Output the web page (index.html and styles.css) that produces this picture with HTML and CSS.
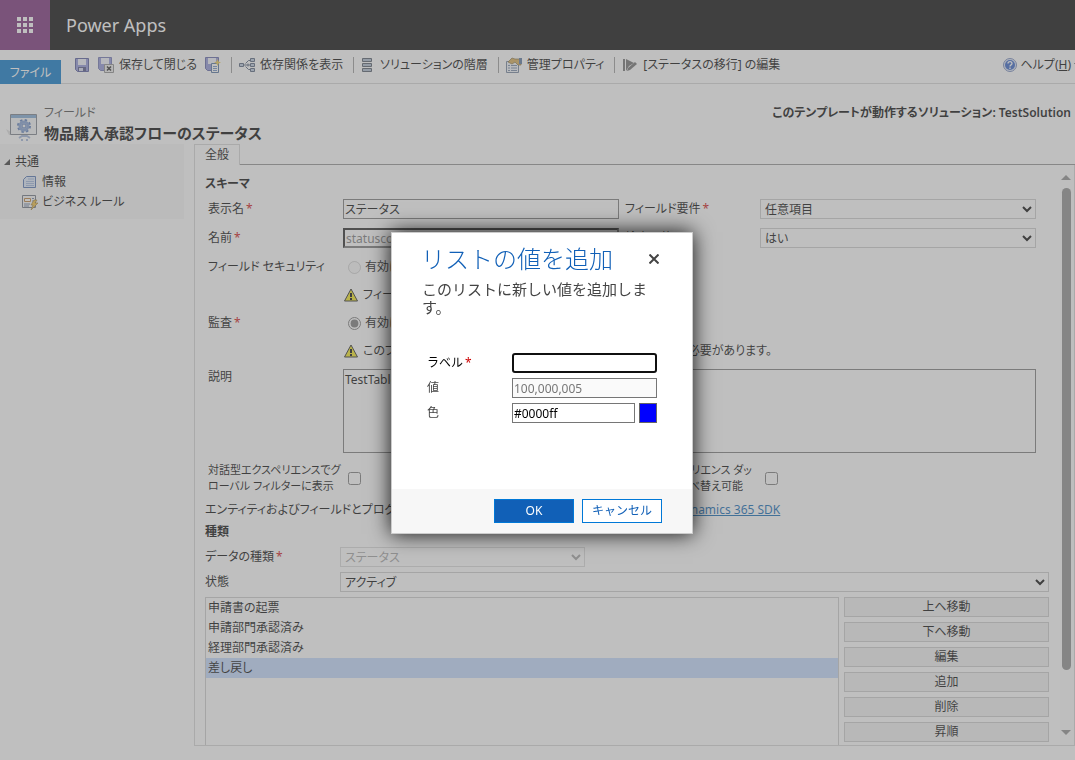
FILE: index.html
```html
<!DOCTYPE html>
<html lang="ja">
<head>
	<meta charset="utf-8">
	<meta name="viewport" content="width=device-width, initial-scale=1">
	<title>Power Apps</title>
	<link rel="stylesheet" href="styles.css">
</head>
<body>
	<div class="page">
		<header class="topbar">
			<button class="waffle" aria-label="アプリ">
				<svg width="16" height="16" viewBox="0 0 16 16" fill="#fff">
					<path d="M0 0h4v4H0zM6 0h4v4H6zM12 0h4v4h-4zM0 6h4v4H0zM6 6h4v4H6zM12 6h4v4h-4zM0 12h4v4H0zM6 12h4v4H6zM12 12h4v4h-4z"/>
				</svg>
			</button>
			<span class="brand">Power Apps</span>
		</header>

		<nav class="ribbon">
			<button class="file-tab">ファイル</button>
			<div class="tools">
				<button class="tool" aria-label="保存">
					<svg width="16" height="16" viewBox="0 0 16 16">
						<path d="M1.500 1.500h13v13h-11l-2-2z" fill="#8c92d6" stroke="#4f5598"/>
						<path d="M4 2h8v6H4z" fill="#eef1fb"/>
						<path d="M4 10h8v4H4z" fill="#4a4f80"/>
						<path d="M5 11h4v3H5z" fill="#d4d8ee"/>
					</svg>
				</button>
				<button class="tool">
					<svg width="16" height="16" viewBox="0 0 16 16">
						<path d="M.5 .5h13v13h-11l-2-2z" fill="#8c92d6" stroke="#6a70b0"/>
						<path d="M3 1h8v6H3z" fill="#eef1fb"/>
						<path d="M6.500 7.500h9v8h-9z" fill="#ececec" stroke="#8a8a8a"/>
						<path d="M9 9.500l4 4M13 9.500l-4 4" stroke="#222" stroke-width="1.500"/>
					</svg>
					保存して閉じる
				</button>
				<button class="tool" aria-label="保存して新規作成">
					<svg width="16" height="16" viewBox="0 0 16 16">
						<path d="M.5 .5h13v13h-11l-2-2z" fill="#8c92d6" stroke="#5a60a4"/>
						<path d="M3 1h8v6H3z" fill="#eef1fb"/>
						<path d="M6.500 6.500h7v9h-7z" fill="#fff" stroke="#4b6c9b"/>
						<path d="M8 9.500h4M8 11.500h4M8 13.500h4" stroke="#6b8cc0"/>
						<path d="M12.500 2l1 2.500 2.500 1-2.500 1-1 2.500-1-2.500-2.500-1 2.500-1z" fill="#e8c64c"/>
					</svg>
				</button>
				<span class="sep"></span>
				<button class="tool">
					<svg width="16" height="16" viewBox="0 0 16 16" fill="#b9c9de" stroke="#4f5f78">
						<path d="M.5 6.500h4v3h-4zM11.500 1.500h4v3h-4zM11.500 6.500h4v3h-4zM11.500 11.500h4v3h-4z"/>
						<path d="M5 8h6M6.500 6.500l3-3h1.500M6.500 9.500l3 3h1.500M9 6.500v3" fill="none"/>
					</svg>
					依存関係を表示
				</button>
				<span class="sep"></span>
				<button class="tool">
					<svg width="14" height="16" viewBox="0 0 14 16" fill="#a9b9cc" stroke="#4a5562">
						<path d="M1.500 1.500h9v3h-9zM1.500 6.500h9v3h-9zM1.500 11.500h9v3h-9z"/>
					</svg>
					ソリューションの階層
				</button>
				<span class="sep"></span>
				<button class="tool">
					<svg width="16" height="16" viewBox="0 0 16 16">
						<path d="M.5 4.500h12v11H.5z" fill="#f1f5fb" stroke="#6d7f99"/>
						<path d="M2 8.500h2M2 11h2M2 13.500h2M5 8.500h6M5 11h6M5 13.500h6" stroke="#7286a4"/>
						<path d="M2 5l4-4 3 1h6v6h-3L9 5 6 7 4 6z" fill="#d5a950" stroke="#7a6530" stroke-width=".7"/>
						<path d="M13 1h3v6h-3z" fill="#55739c"/>
					</svg>
					管理プロパティ
				</button>
				<span class="sep"></span>
				<button class="tool">
					<svg width="16" height="16" viewBox="0 0 16 16" fill="#6b6b6b">
						<path d="M1 2h2v12H1zM4 2l8 4-5 3-3 5z"/>
						<path d="M13 5l2 2-7 6-3 1 1-3z"/>
					</svg>
					[ステータスの移行] の編集
				</button>
			</div>
			<button class="tool help">
				<svg width="14" height="14" viewBox="0 0 14 14">
					<circle cx="7" cy="7" r="6.500" fill="#dfe9fb" stroke="#6f84b8"/>
					<circle cx="7" cy="7" r="5" fill="#2f5fc4"/>
					<path d="M5 5.500c0-2.500 4-2.500 4 0 0 1.500-2 1.300-2 3M7 9.500v1.500" fill="none" stroke="#fff" stroke-width="1.300"/>
				</svg>
				<span>ヘルプ(<u>H</u>)</span>
				<svg width="7" height="4" viewBox="0 0 7 4"><path d="M0 0h7L3.500 4z" fill="#333"/></svg>
			</button>
		</nav>

		<div class="title-row">
			<svg class="entity-icon" width="32" height="32" viewBox="0 0 32 32">
				<path d="M0 20l5 3v3H3z" fill="#ddd"/>
				<path d="M4.500 5.500h26v20h-26z" fill="#f2f4f7" stroke="#777d86"/>
				<path d="M5 6h25v3H5z" fill="#7ba6d2"/>
				<circle cx="18" cy="17" r="6" fill="none" stroke="#5478b8" stroke-width="2" stroke-dasharray="2.400 2.310"/>
				<circle cx="18" cy="17" r="4" fill="#dce7f8" stroke="#7f9dd0" stroke-width="3"/>
				<circle cx="18" cy="17" r="2" fill="#f2f4f7" stroke="#5478b8"/>
				<path d="M13 29l3-2h5l3 2M15 31h2M20 31h2" fill="none" stroke="#9fb2d8" stroke-width="2"/>
			</svg>
			<div class="titles">
				<span class="kind">フィールド</span>
				<h1>物品購入承認フローのステータス</h1>
			</div>
			<p class="solution">このテンプレートが動作するソリューション: TestSolution</p>
		</div>

		<div class="main">
			<aside class="sidebar">
				<h2>
					<svg width="8" height="8" viewBox="0 0 8 8"><path d="M6 1v6H0z" fill="#333"/></svg>
					共通
				</h2>
				<a href="#">
					<svg width="16" height="16" viewBox="0 0 16 16">
						<path d="M4.500 2.500h9v11h-12v-8z" fill="#dce8fa" stroke="#4a6fae"/>
						<path d="M6 5h6M4 7.500h8M4 9.500h8M4 11.500h8" stroke="#9db4dc"/>
					</svg>
					情報
				</a>
				<a href="#">
					<svg width="16" height="16" viewBox="0 0 16 16">
						<path d="M.5 1.500h13v12H.5z" fill="#f7f7f7" stroke="#666e7c"/>
						<path d="M2.500 4.500h6v3h-6z" fill="#fff" stroke="#b77b35"/>
						<path d="M2 10h6M2 12h5M10 4.500h2M10 7h2" stroke="#63799c"/>
						<path d="M12 6h3l-2 3h3l-7 7 2-5H9z" fill="#f0bd3a" stroke="#8b6a20" stroke-width=".6"/>
					</svg>
					ビジネス ルール
				</a>
			</aside>

			<section class="content">
				<div class="tabs">
					<button class="tab">全般</button>
				</div>
				<div class="panel">
					<form class="form">
						<h3>スキーマ</h3>
						<div class="fields">
							<label for="display">表示名<b class="req">*</b></label>
							<input id="display" type="text" value="ステータス">
							<label class="second" for="need">フィールド要件<b class="req">*</b></label>
							<select id="need"><option>任意項目</option></select>

							<label for="name">名前<b class="req">*</b></label>
							<input id="name" class="sunken" type="text" value="statuscode" disabled>
							<label class="second" for="search">検索可能</label>
							<select id="search"><option>はい</option></select>

							<span>フィールド セキュリティ</span>
							<div class="choice wide">
								<input type="radio" id="sec" name="sec" disabled><label for="sec">有効にする</label>
							</div>
							<p class="warn">
								<svg width="14" height="14" viewBox="0 0 14 14"><path d="M7 1l6.500 12H.5z" fill="#f4e614" stroke="#222"/><path d="M7 5v4M7 10v2" stroke="#000" stroke-width="2"/></svg>
								フィールド セキュリティは使用不可
							</p>

							<span>監査<b class="req">*</b></span>
							<div class="choice wide">
								<input type="radio" id="audit" name="audit" checked><label for="audit">有効にする</label>
							</div>
							<p class="warn">
								<svg width="14" height="14" viewBox="0 0 14 14"><path d="M7 1l6.500 12H.5z" fill="#f4e614" stroke="#222"/><path d="M7 5v4M7 10v2" stroke="#000" stroke-width="2"/></svg>
								このフィールドを監査するには、エンティティの監査を有効にする必要があります。
							</p>

							<label for="memo">説明</label>
							<textarea id="memo" class="wide">TestTable のステータス</textarea>

							<label class="lines" for="global">対話型エクスペリエンスでグ<br>ローバル フィルターに表示</label>
							<div class="choice"><input type="checkbox" id="global"></div>
							<label class="lines second spill" for="sort"><span>対話型エクスペリエンス ダッ<br>シュボードで並べ替え可能</span></label>
							<div class="choice"><input type="checkbox" id="sort"></div>
						</div>
						<p class="note">エンティティおよびフィールドとプログラムで対話する方法の詳細情報については、<a href="#">Microsoft Dynamics 365 SDK</a></p>

						<h3>種類</h3>
						<div class="types">
							<label for="datatype">データの種類<b class="req">*</b></label>
							<select id="datatype" class="short" disabled><option>ステータス</option></select>
							<label for="state">状態</label>
							<select id="state"><option>アクティブ</option></select>
						</div>
						<div class="values">
							<select class="list" size="9" aria-label="値の一覧">
								<option>申請書の起票</option>
								<option>申請部門承認済み</option>
								<option>経理部門承認済み</option>
								<option selected>差し戻し</option>
							</select>
							<div class="actions">
								<button type="button">上へ移動</button>
								<button type="button">下へ移動</button>
								<button type="button">編集</button>
								<button type="button">追加</button>
								<button type="button">削除</button>
								<button type="button">昇順</button>
							</div>
						</div>
					</form>
					<div class="scrollbar">
						<svg width="10" height="5" viewBox="0 0 10 5"><path d="M0 5h10L5 0z" fill="#8a8a8a"/></svg>
						<div class="thumb"></div>
						<svg width="10" height="5" viewBox="0 0 10 5"><path d="M0 0h10L5 5z" fill="#8a8a8a"/></svg>
					</div>
				</div>
			</section>
		</div>
	</div>

	<div class="overlay">
		<div class="dialog" role="dialog" aria-labelledby="dialog-title">
			<div class="dialog-head">
				<h2 id="dialog-title">リストの値を追加</h2>
				<button class="close" aria-label="閉じる">
					<svg width="10" height="10" viewBox="0 0 10 10"><path d="M.5 .5l9 9M9.500 .5l-9 9" stroke="#444" stroke-width="2"/></svg>
				</button>
			</div>
			<p class="dialog-text">このリストに新しい値を追加します。</p>
			<div class="dialog-form">
				<label class="main-label" for="label">ラベル<b class="req">*</b></label>
				<input id="label" class="focused" type="text">
				<label for="value">値</label>
				<input id="value" type="text" value="100,000,005" disabled>
				<label for="color">色</label>
				<div class="color-row">
					<input id="color" type="text" value="#0000ff">
					<button class="swatch" aria-label="色の選択"></button>
				</div>
			</div>
			<div class="dialog-foot">
				<button class="ok">OK</button>
				<button class="cancel">キャンセル</button>
			</div>
		</div>
	</div>
</body>
</html>
```

FILE: styles.css
```css
* { box-sizing: border-box; }

body {
	margin: 0;
	font: 12px/16px "Noto Sans", "Noto Sans CJK JP", sans-serif;
	color: #000;
	background: #fff;
}
h1, h2, h3, p { margin: 0; }
button, input, select, textarea { font: inherit; color: inherit; }
button { border: 0; background: none; padding: 0; }
svg { flex: none; }
.req { color: #c00; font-weight: normal; margin-left: 2px; }

/* proportional kana for the page itself */
.page {
	height: 100vh;
	display: flex;
	flex-direction: column;
	overflow: hidden;
	font-feature-settings: "palt";
}

/* top */
.topbar { display: flex; height: 50px; flex: none; background: #000; align-items: center; }
.waffle {
	width: 50px;
	height: 50px;
	background: #742774;
	display: flex;
	align-items: center;
	justify-content: center;
}
.brand { color: #fff; font-size: 18px; line-height: 26px; padding-left: 16px; }

.ribbon {
	display: flex;
	flex: none;
	height: 34px;
	border-bottom: 1px solid #d4d4d4;
}
.file-tab { width: 61px; height: 24px; margin-top: 10px; padding-top: 2px; background: #0072c6; color: #fff; flex: none; }
.tools { display: flex; align-items: center; flex: 1; padding: 0 0 4px 13px; min-width: 0; }
.tool { display: flex; align-items: center; gap: 5px; white-space: nowrap; margin-right: 8px; }
.sep { width: 1px; height: 16px; background: #999; margin: 0 7px 0 2px; }
.help { gap: 3px; margin-right: -6px; padding-bottom: 4px; }

.title-row { display: flex; height: 60px; flex: none; padding: 21px 4px 0 6px; }
.entity-icon { margin-top: 4px; }
.titles { flex: 1; padding-left: 6px; }
.kind { color: #444; }
.titles h1 { font-size: 15px; line-height: 24px; }
.solution { font-weight: 600; }

/* main */
.main { flex: 1; display: flex; min-height: 0; gap: 10px; padding-bottom: 14px; }
.sidebar { width: 184px; flex: none; height: 75px; background: #f6f6f6; padding: 8px 4px; }
.sidebar h2 { display: flex; align-items: center; gap: 3px; font-size: 12px; font-weight: normal; line-height: 20px; }
.sidebar a { display: flex; align-items: center; gap: 4px; padding-left: 18px; color: #000; text-decoration: none; line-height: 20px; }

.content { flex: 1; display: flex; flex-direction: column; min-width: 0; }
.tabs { display: flex; flex: none; height: 21px; }
.tabs::after { content: ""; flex: 1; border-bottom: 1px solid #8e8e8e; }
.tab { width: 46px; border: 1px solid #d4d4d4; border-bottom: 0; }
.panel {
	flex: 1;
	display: flex;
	gap: 11px;
	min-height: 0;
	overflow: hidden;
	border: 1px solid #d4d4d4;
	border-top: 0;
}
.form { flex: 1; min-width: 0; padding: 10px 0 0 10px; }
.form h3 { font-size: 12px; line-height: 18px; margin-bottom: 6px; }
.fields {
	display: grid;
	grid-template-columns: 135px 1fr 141px 1fr;
	grid-auto-rows: minmax(18px, auto);
	row-gap: 9px;
	align-items: center;
	padding: 0 13px 0 3px;
}
.second { padding-left: 6px; }
.wide { grid-column: 2 / -1; }
.warn { grid-column: 2 / -1; display: flex; align-items: center; gap: 5px; padding-left: 1px; white-space: nowrap; height: 18px; }
.choice { display: flex; align-items: center; gap: 4px; height: 20px; }
.choice input { margin: 0 0 0 5px; accent-color: #767676; }
.fields > label[for="memo"] { align-self: start; }
.lines { white-space: nowrap; font-size: 11px; }
.spill { display: flex; justify-content: flex-end; padding-right: 8px; }

input[type="text"], textarea {
	width: 100%;
	height: 20px;
	min-width: 0;
	border: 1px solid #767676;
	background: #fff;
	padding: 0 1px;
}
input[type="text"]:disabled { color: #777; }
input.sunken { border: 2px inset #767676; }
textarea { height: 84px; display: block; resize: none; padding-top: 2px; }
select { width: 100%; height: 20px; border: 1px solid #cacaca; background: #fff; border-radius: 0; }
select:disabled { color: #777; }

.note { line-height: 18px; padding-top: 7px; margin-bottom: 4px; white-space: nowrap; }
.note a { color: #0563b1; }

.types { display: grid; grid-template-columns: 135px 1fr; row-gap: 5px; align-items: center; }
.short { width: 245px; }
.values { display: flex; gap: 5px; padding-top: 5px; }
.list { flex: 1; height: 200px; padding: 0; overflow: hidden; }
.list option { height: 20px; padding: 0 2px; line-height: 18px; }
.list option:checked { background: #c0d8ff linear-gradient(#c0d8ff, #c0d8ff); color: #000; }
.actions { width: 205px; display: flex; flex-direction: column; gap: 5px; }
.actions button { height: 20px; flex: none; border: 1px solid #cacaca; background: #f0f0f0; }

.scrollbar { width: 14px; display: flex; flex-direction: column; align-items: center; padding: 10px 2px 10px 0; background: #fcfcfc; }
.thumb { width: 9px; height: 482px; border-radius: 5px; background: #8a8a8a; margin: 8px 0 auto; }

/* dialog */
.overlay {
	position: fixed;
	inset: 0;
	background: rgba(128, 128, 128, .5);
	display: flex;
	align-items: center;
	justify-content: center;
	padding: 6px 0 0 9px;
}
.dialog {
	width: 302px;
	background: #fff;
	border: 1px solid #ccc;
	box-shadow: 0 0 20px rgba(0, 0, 0, .9);
	color: #444;
}
.dialog-head { display: flex; justify-content: space-between; align-items: center; padding: 10px 33px 0 29px; }
.dialog-head h2 { font-size: 24px; line-height: 32px; font-weight: 300; color: #1160b7; }
.close { display: flex; }
.dialog-text { font-size: 15px; line-height: 18px; padding: 5px 42px 0 30px; }
.dialog-form {
	display: grid;
	grid-template-columns: 85px 1fr;
	row-gap: 5px;
	align-items: center;
	padding: 37px 35px 66px;
}
.dialog-form input:disabled { background: #fafafa; }
.dialog-form input { color: #000; }
.main-label { color: #000; }
.dialog-form .focused { border: 2px solid #101010; border-radius: 3px; outline: 0; }
.color-row { display: flex; gap: 4px; }
.swatch { width: 18px; height: 20px; flex: none; background: #00f; border: 1px solid #666; }
.dialog-foot { display: flex; justify-content: flex-end; gap: 8px; background: #f7f7f7; padding: 10px 30px; }
.ok, .cancel { width: 80px; height: 24px; border: 1px solid #0078d7; }
.ok { background: #1160b7; color: #fff; }
.cancel { background: #fff; color: #1160b7; }
```
